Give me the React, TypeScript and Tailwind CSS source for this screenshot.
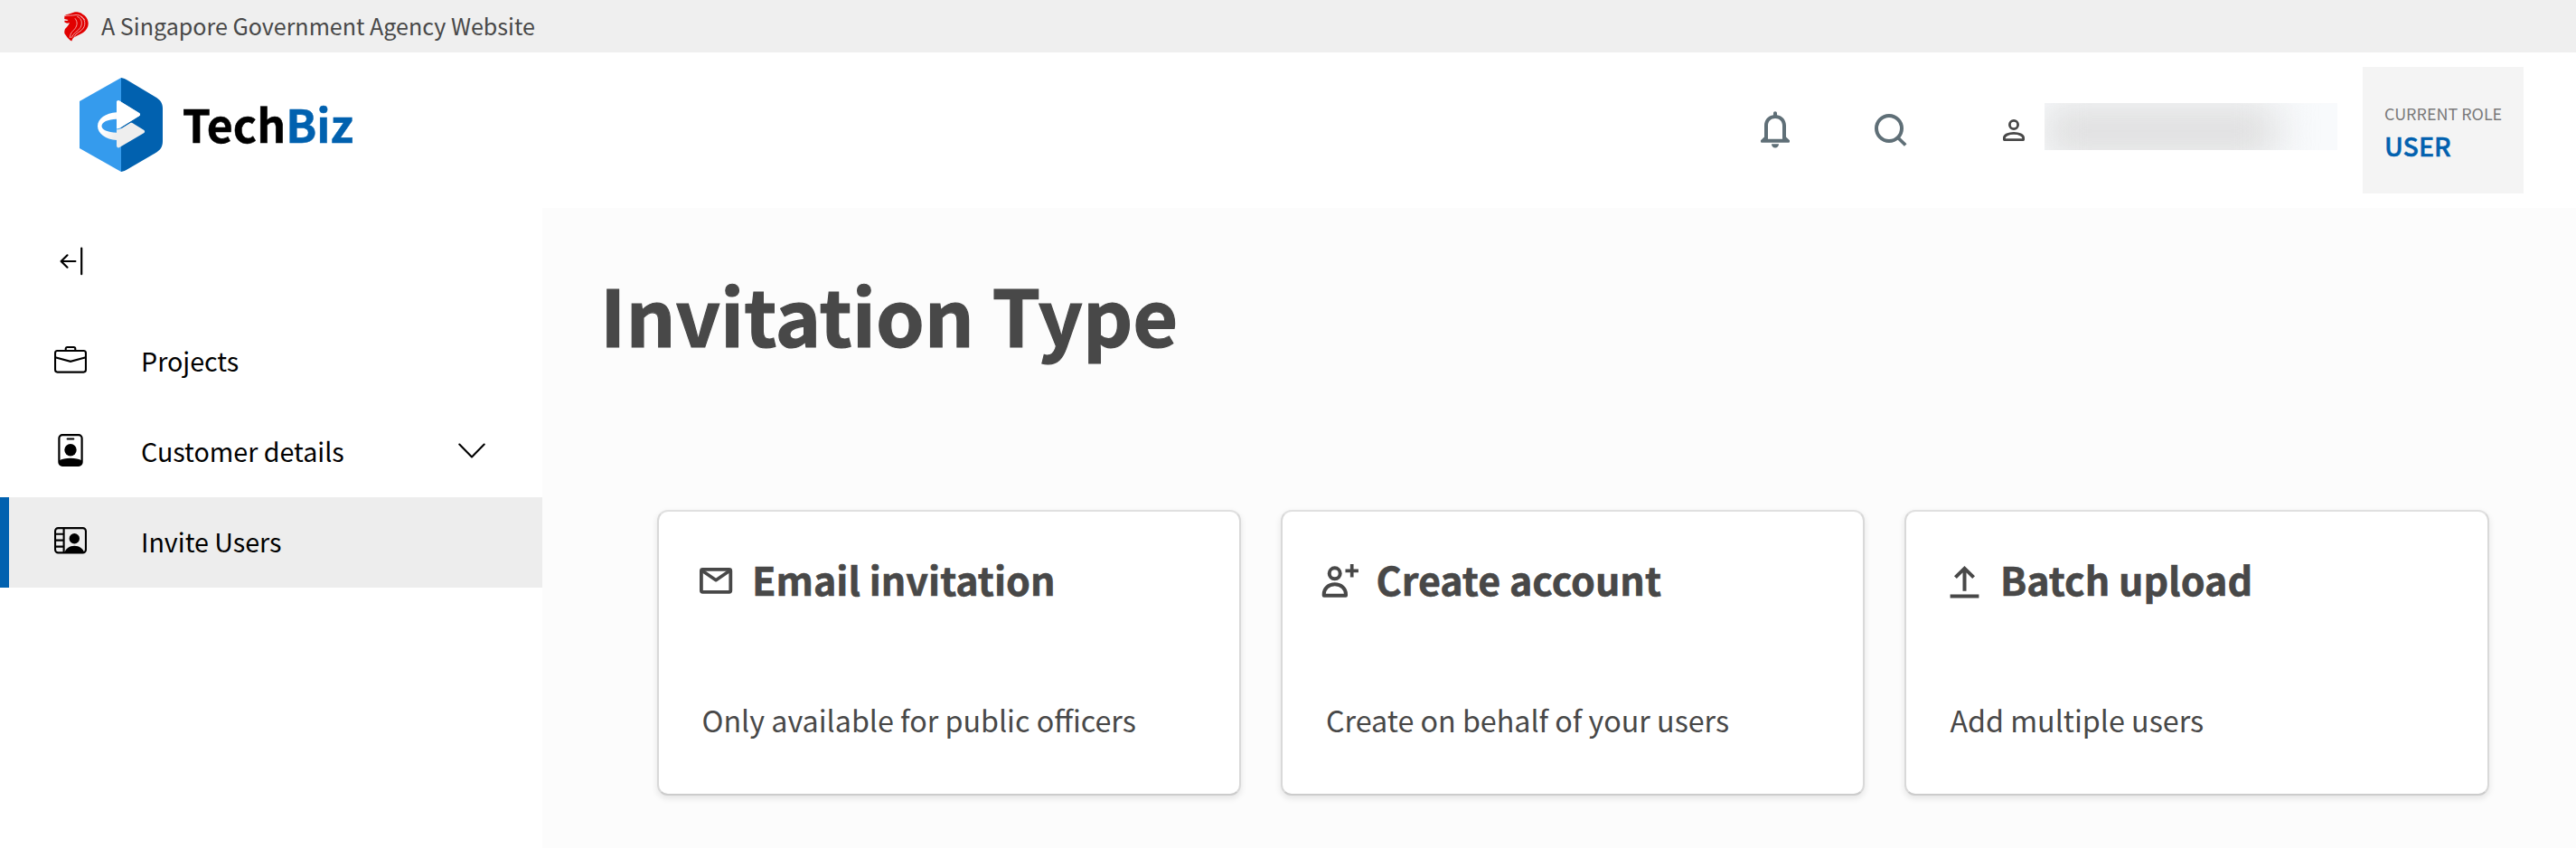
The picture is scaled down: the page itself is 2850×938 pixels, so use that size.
import type { ReactNode } from 'react';

function LionMark() {
  return (
    <svg width="27" height="33" viewBox="0 0 27 33" className="block shrink-0">
      <path
        fill="#e10000"
        d="M.4 4.200C3 2.500 5.500 2.400 7.500 1.700 9.500.6 12 0 14.500.2c3 .3 5 1.500 6.500 3 3 1.300 5.700 5.300 5.700 9.800 0 4-2.200 7.500-5.700 10-3 2-8.500 4.200-10.700 5.700-1 1-1.500 2.300-2 3.800-2.500-1.300-4.200-3.200-5.800-5.500L.5 24.200c-.4-1.200-.3-3.400.5-5.200 1.500-1.500 3.500-3.500 5-6.800-1.300.4-2.500.6-3.700.3L.2 11.200l.4-1.500 2.600.2 1.400-1L.2 8Z"
      />
      <g fill="none" stroke="#f3b5b5" strokeWidth=".9" strokeLinecap="round">
        <path d="M0 4.700c4-.9 9-.3 13-1.200 4-.4 8 2.400 9.700 5.500" />
        <path d="M14.500 5.200c5.500 2.500 6 8 3.300 12.500-2.800 4.300-8.300 6-9.800 11" />
        <path d="M18.500 5.300c5 3.200 5.300 8.500 2.800 12.700-2.800 4.500-8.300 5-10.300 9.500" />
        <path d="M12.200 7.600c3 4 2.200 7.500-.2 11-2.200 3-5.700 4.500-5.600 10" />
      </g>
    </svg>
  );
}

function LogoMark() {
  return (
    <svg width="92" height="104" viewBox="0 0 92 104" className="block shrink-0">
      <defs>
        <linearGradient id="ribbon" gradientUnits="userSpaceOnUse" x1="26" y1="58" x2="38" y2="66">
          <stop offset="0" stopColor="#fff" />
          <stop offset="1" stopColor="#eee" />
        </linearGradient>
      </defs>
      <path fill="#359bed" d="M46 0 0 26v52l46 26Z" />
      <path
        fill="#0161af"
        d="M46 0c3 .7 4.500 1.300 7 2.700L83.500 21C89.500 24.600 92 28 92 34v36c0 6.500-2.500 10-8.500 13.500L53 101.300c-2.500 1.400-4 2.300-7 2.700Z"
      />
      <path
        fill="#eee"
        d="M41 58.500v16.800c0 1.700 1.700 2.600 3.200 1.800L71 61.300c1.500-.9 1.500-2.700 0-3.600l-12.200-7.500c-1-.6-2-.6-3 0l-8.500 5.300c-2 1.100-4.200 1.800-6.300 1.800Z"
      />
      <path
        fill="url(#ribbon)"
        d="M41 27c0-1.600 1.500-2.300 3-1.500l22 13.400c1.400.9 1.400 2.500 0 3.400L45.500 55c-1.500.9-3 1.200-4.500 1.300V45.700C31 46 24.500 49 24.500 53.500c0 4 6.500 6.800 16.500 7.200V69c-12-.7-21-7.200-21-15.500S29 39 41 38.200Z"
      />
      <path
        fill="#fff"
        d="M41 27c0-1.600 1.500-2.300 3-1.500l22 13.400c1.400.9 1.400 2.500 0 3.400L45.500 55c-1.500.9-3 1.200-4.500 1.300Z"
      />
    </svg>
  );
}

function BellIcon() {
  return (
    <svg width="32" height="42" viewBox="0 0 32 42" className="block shrink-0" fill="#5f6f77">
      <path d="M16 .3c1.200 0 2 .9 2 2v2C24 5.200 28 9.800 28 16v12.500l4 3.800v1.200c0 .8-.5 1.300-1.300 1.300H1.300C.5 34.800 0 34.300 0 33.500v-1.200l4-3.800V16C4 9.800 8 5.200 14 4.300v-2c0-1.100.8-2 2-2ZM8 30.800h16V16c0-4.700-3.300-7.900-8-7.900s-8 3.200-8 7.900Z" />
      <path d="M12 36.300h8c0 2.400-1.700 4.200-4 4.200s-4-1.800-4-4.200Z" />
    </svg>
  );
}

function SearchIcon() {
  return (
    <svg width="36" height="38" viewBox="0 0 36 38" className="block shrink-0" fill="none" stroke="#5f6f77" strokeWidth="4">
      <circle cx="16" cy="17" r="14" />
      <path d="m25.500 27 8.700 8.500" strokeWidth="3.800" />
    </svg>
  );
}

function UserIcon() {
  return (
    <svg width="24" height="24" viewBox="0 0 24 24" className="block shrink-0" fill="none" stroke="#484848" strokeWidth="2.800">
      <circle cx="12" cy="6" r="4.600" />
      <path strokeLinejoin="round" d="M1.400 22.600v-2c0-3 4.600-5.200 10.600-5.200s10.600 2.200 10.600 5.200v2Z" />
    </svg>
  );
}

function CollapseIcon() {
  return (
    <svg width="28" height="32" viewBox="0 0 28 32" className="block" fill="none" stroke="#000" strokeWidth="2.200" strokeLinecap="round" strokeLinejoin="round">
      <path d="M8.500 9.300 1.600 16l6.900 6.700M1.600 16h15.800M24.200 1.600v28.600" />
    </svg>
  );
}

function BriefcaseIcon() {
  return (
    <svg width="36" height="36" viewBox="0 0 36 36" className="block" fill="none" stroke="#000" strokeWidth="2.100">
      <rect x="1.050" y="8" width="33.900" height="23.600" rx="2.500" />
      <path d="M12.700 8V5.800c0-1.100.7-1.800 1.800-1.800h7c1.100 0 1.800.7 1.800 1.800V8M1 15.300l17 4.500 17-4.500" />
    </svg>
  );
}

function BadgeIcon() {
  return (
    <svg width="36" height="36" viewBox="0 0 36 36" className="block">
      <rect x="5.400" y="1.100" width="25.200" height="33.800" rx="3.600" fill="none" stroke="#000" strokeWidth="2.200" />
      <path d="M14.700 5.500h6.600" stroke="#000" strokeWidth="2.200" strokeLinecap="round" />
      <circle cx="18" cy="17.800" r="6.700" />
      <path d="M5.400 29.500c3-1.800 7.600-2.800 12.600-2.800s9.600 1 12.600 2.800v2.500a3 3 0 0 1-3 3H8.400a3 3 0 0 1-3-3Z" />
    </svg>
  );
}

function ContactIcon() {
  return (
    <svg width="36" height="36" viewBox="0 0 36 36" className="block">
      <g fill="none" stroke="#000" strokeWidth="2.100">
        <rect x="1.050" y="4.100" width="33.900" height="27.300" rx="3.400" />
        <path d="M10.600 4v27.500M1 10.700h9.600M1 17.600h9.600M1 24.600h9.600" />
      </g>
      <circle cx="22.300" cy="15.700" r="5.700" />
      <path d="M11.400 31.500c1.200-4.600 5.200-7.700 10.900-7.700s9.700 3.100 10.900 7.700Z" />
    </svg>
  );
}

function ChevronIcon() {
  return (
    <svg width="30" height="18" viewBox="0 0 30 18" className="block" fill="none" stroke="#000" strokeWidth="2.100" strokeLinecap="round" strokeLinejoin="round">
      <path d="m1.300 1.500 13.700 14 13.700-14" />
    </svg>
  );
}

function MailIcon() {
  return (
    <svg width="48" height="48" viewBox="0 0 48 48" className="block shrink-0" fill="none" stroke="#484848" strokeWidth="3.800" strokeLinejoin="round">
      <rect x="6.900" y="13.900" width="32.400" height="24.900" rx="1.500" />
      <path d="m7.500 15 15.600 10.700L38.700 15" strokeWidth="3.600" />
    </svg>
  );
}

function PersonAddIcon() {
  return (
    <svg width="48" height="48" viewBox="0 0 48 48" className="block shrink-0" fill="none" stroke="#484848" strokeWidth="4">
      <circle cx="17.700" cy="18.300" r="6" />
      <path strokeLinejoin="round" d="M5.700 42.700v-1.200c0-6.500 5-11.200 12.100-11.200S30 35 30 41.500v1.200Z" />
      <path d="M29.500 15.300h14.400M36.700 8.100v14.400" strokeWidth="3.700" />
    </svg>
  );
}

function UploadIcon() {
  return (
    <svg width="48" height="48" viewBox="0 0 48 48" className="block shrink-0" fill="none" stroke="#484848" strokeWidth="4">
      <path d="M7.600 43.400h31.800M23.500 37.800V14M13.400 22.700l10.100-10 10.100 10" />
    </svg>
  );
}

function NavItem({ icon, label, active = false, expandable = false }: { icon: ReactNode; label: string; active?: boolean; expandable?: boolean }) {
  return (
    <a
      className={
        active
          ? 'flex h-[100px] items-center border-l-10 border-[#0161af] bg-[#ededed] pr-[63px] pl-[50px]'
          : 'flex h-[100px] items-center pr-[63px] pl-[60px]'
      }
    >
      <span className="mb-1 w-[96px]">{icon}</span>
      <span className="flex-1 pb-[2px] text-[28.650px] leading-[40px] text-black">{label}</span>
      {expandable && (
        <span className="mb-0.5">
          <ChevronIcon />
        </span>
      )}
    </a>
  );
}

function OptionCard({ icon, title, text }: { icon: ReactNode; title: string; text: string }) {
  return (
    <article className="h-[316px] rounded-xl border-2 border-t-[#e0e0e0] border-r-[#d9d9d9] border-b-[#cccccc] border-l-[#d9d9d9] bg-white pt-[50px] pl-[40.500px] shadow-[0_3px_7px_rgba(0,0,0,0.1)]">
      <div className="flex h-[48px] items-center gap-[15px]">
        {icon}
        <h2 className="text-[43px] leading-[48px] font-bold [-webkit-text-stroke:0.6px_#484848]">{title}</h2>
      </div>
      <p className="mt-[108px] pl-[7.500px] text-[32.250px] leading-[48px]">{text}</p>
    </article>
  );
}

export default function App() {
  return (
    <div className='flex h-[938px] w-[2850px] flex-col overflow-hidden bg-white font-["Noto_Sans_CJK_SC","Noto_Sans",sans-serif] text-[#484848]'>
      <div className="flex h-[58px] shrink-0 items-center bg-[#efefef] pl-[71px]">
        <LionMark />
        <span className="ml-[14px] pb-[2px] text-[25.070px] leading-[40px]">A Singapore Government Agency Website</span>
      </div>

      <header className="flex h-[172px] shrink-0 items-center justify-between pr-[58px] pl-[88px]">
        <div className="flex items-center gap-[21.700px] pb-[12px]">
          <LogoMark />
          <span className="pb-[4px] text-[50px] leading-[60px] font-bold text-black [-webkit-text-stroke:0.5px]">
            Tech<span className="text-[#0161af]">Biz</span>
          </span>
        </div>
        <div className="flex items-center">
          <BellIcon />
          <span className="ml-[94px]">
            <SearchIcon />
          </span>
          <span className="ml-[106px]">
            <UserIcon />
          </span>
          <div className="mb-2 ml-[22px] flex h-[52px] w-[324px] overflow-hidden bg-[#f8fafc]">
            <div className="mt-[2px] h-[58px] w-[258px] shrink-0 bg-[#dedede] blur-[22px]" />
          </div>
          <div className="ml-[28px] flex h-[140px] w-[178px] flex-col bg-[#f4f4f4] pt-[33px] pl-[24px]">
            <span className="text-[17.950px] leading-[36px] whitespace-nowrap text-[#7a7a7a]">CURRENT ROLE</span>
            <span className="text-[28.500px] leading-[36px] font-medium text-[#0161af] [-webkit-text-stroke:0.5px]">USER</span>
          </div>
        </div>
      </header>

      <div className="flex flex-1">
        <nav className="w-[600px] shrink-0 bg-white">
          <div className="flex h-[120px] items-start pt-[43px] pl-[66px]">
            <CollapseIcon />
          </div>
          <NavItem icon={<BriefcaseIcon />} label="Projects" />
          <NavItem icon={<BadgeIcon />} label="Customer details" expandable />
          <NavItem icon={<ContactIcon />} label="Invite Users" active />
        </nav>

        <main className="flex-1 bg-[#fcfcfc] pt-[57px]">
          <h1 className="pl-[64px] text-[86px] leading-[120px] font-bold [-webkit-text-stroke:1.2px_#484848]">Invitation Type</h1>
          <div className="mt-[157px] grid grid-cols-3 gap-[44.400px] pr-[96.500px] pl-[126.500px]">
            <OptionCard icon={<MailIcon />} title="Email invitation" text="Only available for public officers" />
            <OptionCard icon={<PersonAddIcon />} title="Create account" text="Create on behalf of your users" />
            <OptionCard icon={<UploadIcon />} title="Batch upload" text="Add multiple users" />
          </div>
        </main>
      </div>
    </div>
  );
}
